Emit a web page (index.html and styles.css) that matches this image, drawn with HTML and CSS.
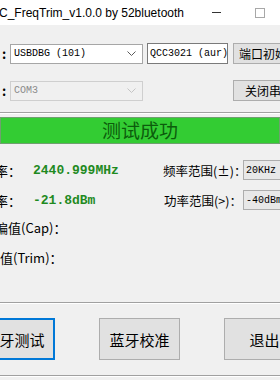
FILE: index.html
```
<!DOCTYPE html>
<html lang="zh-CN">
<head>
  <meta charset="UTF-8">
  <title>QCC_FreqTrim</title>
  <link rel="stylesheet" href="styles.css">
</head>
<body>
  <div class="titlebar">
    <span class="title">C_FreqTrim_v1.0.0 by 52bluetooth</span>
    <span class="win-min"></span>
    <span class="win-max"></span>
  </div>

  <div class="main">
    <div class="row top-row">
      <span class="colon">:</span>
      <div class="combo">
        <span>USBDBG (101)</span>
        <svg width="9" height="6" viewBox="0 0 9 6"><polyline points="0.5,0.5 4.5,4.5 8.5,0.5" fill="none" stroke="#5a5a5a" stroke-width="1"/></svg>
      </div>
      <div class="edit">QCC3021 (aur)</div>
      <button class="btn small">端口初始化</button>
    </div>

    <div class="row top-row second">
      <span class="colon">:</span>
      <div class="combo disabled">
        <span>COM3</span>
        <svg width="9" height="6" viewBox="0 0 9 6"><polyline points="0.5,0.5 4.5,4.5 8.5,0.5" fill="none" stroke="#c4c4c4" stroke-width="1"/></svg>
      </div>
      <div class="spacer"></div>
      <button class="btn small">关闭串口</button>
    </div>

    <div class="sep"></div>

    <div class="status">测试成功</div>

    <div class="row data-row first">
      <span class="label freq">频率：</span>
      <span class="value">2440.999MHz</span>
      <span class="range-label">频率范围(±)：</span>
      <div class="box">20KHz</div>
    </div>

    <div class="row data-row pwr">
      <span class="label freq">功率：</span>
      <span class="value">-21.8dBm</span>
      <span class="range-label">功率范围(&gt;)：</span>
      <div class="box">-40dBm</div>
    </div>

    <div class="row data-row cap">
      <span class="label cut">偏值(Cap)：</span>
    </div>

    <div class="row data-row trim">
      <span class="label">值(Trim)：</span>
    </div>

    <div class="sep bottom-sep"></div>

    <div class="actions">
      <button class="btn big focused">蓝牙测试</button>
      <button class="btn big">蓝牙校准</button>
      <button class="btn big">退出</button>
    </div>

    <div class="sep last-sep"></div>
  </div>
</body>
</html>
```

FILE: styles.css
```
* {
  box-sizing: border-box;
}

body {
  margin: 0;
  width: 280px;
  height: 380px;
  overflow: hidden;
  background: #f0f0f0;
  font-family: "Noto Sans CJK SC", "Noto Sans", sans-serif;
  color: #000;
}

.titlebar {
  height: 25px;
  background: #fff;
  display: flex;
  align-items: center;
}

.title {
  font-family: "Liberation Sans", sans-serif;
  font-size: 12px;
  margin-left: -1px;
  width: 211px;
  white-space: nowrap;
}

.win-min {
  width: 9px;
  height: 1px;
  background: #333;
  margin-left: 2px;
}

.win-max {
  width: 10px;
  height: 10px;
  border: 1px solid #a8a8a8;
  margin-left: 34px;
}

.main {
  display: flex;
  flex-direction: column;
}

.row {
  display: flex;
  align-items: center;
  white-space: nowrap;
  margin-right: -40px;
}

.row > * {
  flex: none;
}

.top-row {
  height: 21px;
  margin-top: 18px;
}

.top-row.second {
  margin-top: 16px;
}

.colon {
  width: 10px;
  padding-left: 2px;
  font-size: 13px;
  font-weight: bold;
}

.combo {
  width: 133px;
  height: 20px;
  background: #fff;
  border: 1px solid #a6a6a6;
  display: flex;
  align-items: center;
  justify-content: space-between;
  padding: 0 6px 0 3px;
  font-family: "Liberation Mono", "Noto Sans CJK SC", monospace;
  font-size: 10px;
}

.combo.disabled {
  background: #f0f0f0;
  border-color: #cfcfcf;
  color: #8a8a8a;
}

.edit {
  width: 81px;
  height: 21px;
  margin-left: 4px;
  background: #fff;
  border: 1px solid #7a7a7a;
  padding: 0 2px;
  display: flex;
  align-items: center;
  font-family: "Liberation Mono", "Noto Sans CJK SC", monospace;
  font-size: 10px;
}

.spacer {
  width: 85px;
}

.btn {
  flex: none;
  background: #e1e1e1;
  border: 1px solid #adadad;
  border-radius: 0;
  padding: 0;
  font-family: "Noto Sans CJK SC", sans-serif;
  color: #000;
}

.btn.small {
  width: 72px;
  height: 21px;
  margin-left: 5px;
  font-size: 12px;
  line-height: 19px;
}

.sep {
  height: 2px;
  border-top: 1px solid #a0a0a0;
  border-bottom: 1px solid #fff;
  margin-top: 11px;
}

.status {
  margin-top: 3px;
  height: 27px;
  background: #33cc33;
  border: 1px solid #6f9f6f;
  color: #0c5c0c;
  font-size: 19px;
  line-height: 24px;
  text-align: center;
}

.data-row {
  height: 20px;
  margin-top: 10px;
}

.data-row.first {
  margin-top: 16px;
}

.data-row.cap {
  margin-top: 7px;
}

.label {
  font-size: 13px;
}

.label.freq {
  width: 51px;
  margin-left: -18px;
}

.label.cut {
  margin-left: -5px;
}

.value {
  width: 130px;
  font-family: "Liberation Mono", monospace;
  font-weight: bold;
  font-size: 13px;
  color: #1f8a1f;
}

.range-label {
  width: 79px;
  font-size: 12.5px;
  text-align: right;
}

.box {
  width: 60px;
  height: 20px;
  margin-left: 1px;
  background: #e8e8e8;
  border: 1px solid #adadad;
  padding: 0 2px;
  display: flex;
  align-items: center;
  font-family: "Liberation Mono", monospace;
  font-size: 10px;
}

.bottom-sep {
  margin-top: 35px;
}

.actions {
  display: flex;
  margin-top: 14px;
  margin-left: -26px;
}

.btn.big {
  width: 81px;
  height: 42px;
  font-size: 15px;
  margin-right: 44px;
}

.btn.big:last-child {
  margin-right: 0;
}

.btn.focused {
  border: 2px solid #0078d7;
}

.last-sep {
  margin-top: 15px;
}
```
